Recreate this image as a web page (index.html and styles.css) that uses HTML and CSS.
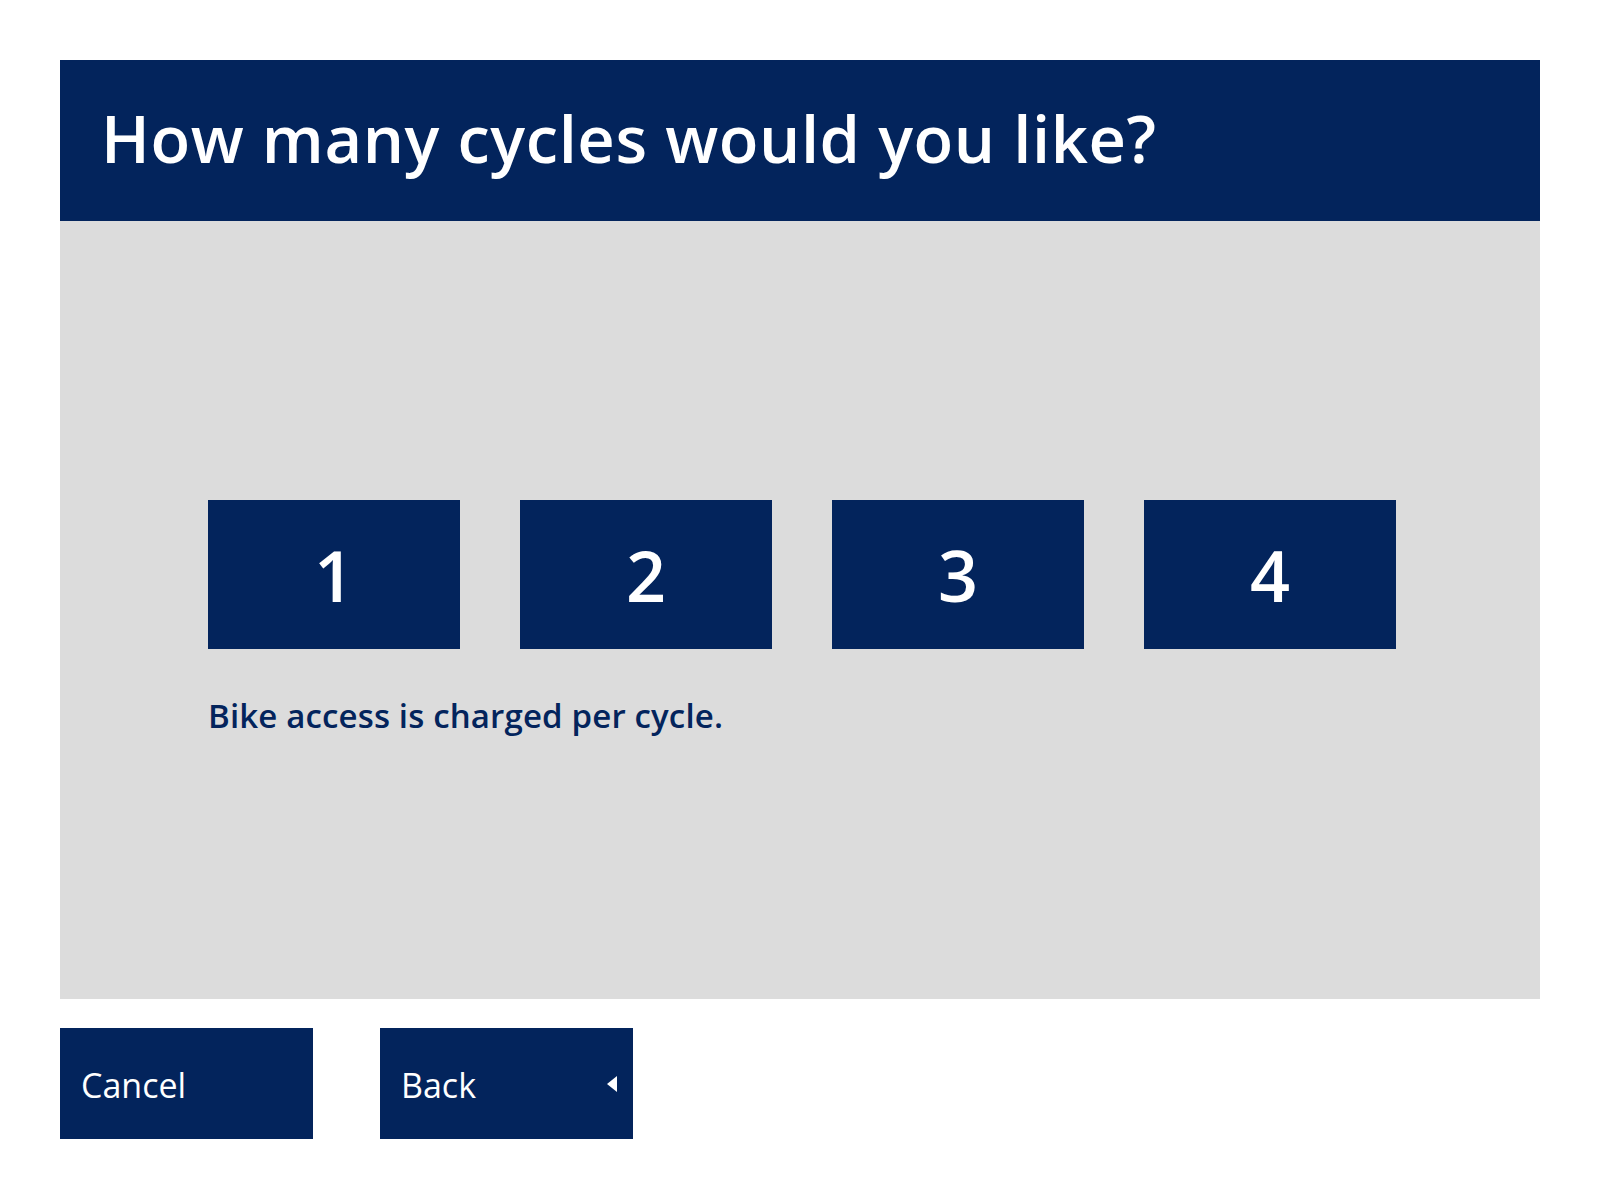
FILE: index.html
```html
<!DOCTYPE html>
<html lang="en">
<head>
    <meta charset="UTF-8">
    <title>Cycle Quantity</title>
    <link rel="stylesheet" href="styles.css">
</head>
<body>
    <div class="screen">
        <!-- Question Header -->
        <div class="question-header">
            <h1>How many cycles would you like?</h1>
        </div>

        <!-- Choices Panel -->
        <div class="choice-panel">
            <div class="choice-area">
                <div class="choice-row">
                    <button type="button" class="choice-btn">1</button>
                    <button type="button" class="choice-btn">2</button>
                    <button type="button" class="choice-btn">3</button>
                    <button type="button" class="choice-btn">4</button>
                </div>
                <p class="choice-note">Bike access is charged per cycle.</p>
            </div>
        </div>

        <!-- Navigation -->
        <div class="nav-row">
            <button type="button" class="nav-btn">Cancel</button>
            <button type="button" class="nav-btn">Back <span class="back-arrow"></span></button>
        </div>
    </div>
</body>
</html>
```

FILE: styles.css
```css
body {
    margin: 0;
    background-color: #ffffff;
    font-family: "Open Sans", Lato, sans-serif;
}

.screen {
    padding: 60px;
}

.question-header {
    background-color: #03245c; /* Navy */
    height: 161px;
    display: flex;
    align-items: center;
    padding: 0 0 4px 41px;
    box-sizing: border-box;
}

.question-header h1 {
    margin: 0;
    color: #ffffff;
    font-size: 65px;
    font-weight: 600;
    letter-spacing: 0.6px;
    line-height: 1;
}

.choice-panel {
    background-color: #dcdcdc; /* Light grey */
    height: 778px;
    padding-top: 279px;
    box-sizing: border-box;
}

.choice-area {
    width: 1188px;
    margin: 0 auto;
    transform: translateX(2px);
}

.choice-row {
    display: flex;
    gap: 60px;
}

.choice-btn {
    width: 252px;
    height: 149px;
    background-color: #03245c;
    color: #ffffff;
    border: none;
    font-family: inherit;
    font-size: 70px;
    font-weight: 600;
    padding: 0;
    cursor: pointer;
}

.choice-note {
    margin: 46px 0 0;
    color: #03245c;
    font-size: 33px;
    font-weight: 600;
    letter-spacing: 0.15px;
    line-height: 1.3;
}

.nav-row {
    display: flex;
    gap: 67px;
    margin-top: 29px;
}

.nav-btn {
    width: 253px;
    height: 111px;
    background-color: #03245c;
    color: #ffffff;
    border: none;
    font-family: inherit;
    font-size: 34px;
    text-align: left;
    padding: 2px 16px 0 21px;
    display: flex;
    align-items: center;
    justify-content: space-between;
    cursor: pointer;
}

/* Small left-pointing triangle */
.back-arrow {
    width: 0;
    height: 0;
    margin-top: -2px;
    border-top: 8px solid transparent;
    border-bottom: 8px solid transparent;
    border-right: 10px solid #ffffff;
}
```
